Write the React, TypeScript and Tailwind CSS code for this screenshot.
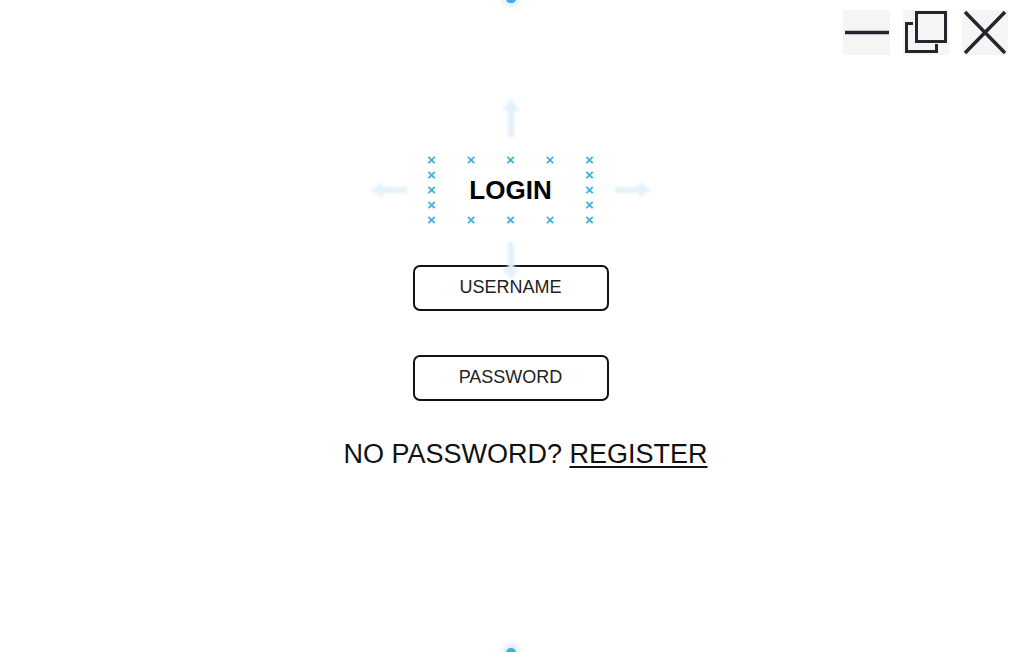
import React from "react";

const X = () => (
  <span className="block text-[15px] font-semibold leading-[11px] text-[#3ab0da]">×</span>
);

export default function App() {
  const row1 = [0, 1, 2, 3, 4];
  return (
    <div className="relative h-[652px] w-full overflow-hidden bg-white font-['Liberation_Sans',Arial,sans-serif] text-[#111]">
      {/* top & bottom dots */}
      <div className="absolute left-[506px] top-[-6px] h-[9px] w-[10px] rounded-full bg-[#3aaedc] shadow-[0_0_6px_3px_rgba(58,174,220,0.25)]" />
      <div className="absolute left-[506px] bottom-[-6px] h-[10px] w-[10px] rounded-full bg-[#3aaedc] shadow-[0_0_6px_3px_rgba(58,174,220,0.25)]" />

      {/* window controls */}
      <div className="absolute right-[13px] top-[10px] flex gap-[13px]">
        <div className="h-[45px] w-[47px] bg-[#f5f5f5]">
          <svg width="47" height="45" viewBox="0 0 47 45">
            <line x1="2" y1="22.5" x2="46" y2="22.5" stroke="#25252e" strokeWidth="3.5" />
          </svg>
        </div>
        <div className="h-[45px] w-[46px] bg-[#f5f5f5]">
          <svg width="46" height="45" viewBox="0 0 46 45" fill="none" stroke="#25252e" strokeWidth="3">
            <rect x="13.5" y="2.5" width="29" height="29" />
            <path d="M10 13.5 H3.5 V41.5 H33.5 V34" />
          </svg>
        </div>
        <div className="h-[45px] w-[46px] bg-[#f5f5f5]">
          <svg width="46" height="45" viewBox="0 0 46 45" fill="none" stroke="#25252e" strokeWidth="3.5">
            <line x1="3" y1="2" x2="43" y2="43" />
            <line x1="43" y1="2" x2="3" y2="43" />
          </svg>
        </div>
      </div>

      <div className="flex flex-col items-center pt-[152px]">
        <div className="relative">
          {/* faint arrows */}
          <svg className="absolute left-[89px] top-[-53px] blur-[1.5px]" width="20" height="40" viewBox="0 0 20 40">
            <path d="M10 0 L19 12 H13 V38 H7 V12 H1 Z" fill="#e2f1fa" />
          </svg>
          <svg className="absolute left-[89px] top-[88px] blur-[1.5px]" width="20" height="40" viewBox="0 0 20 40">
            <path d="M10 40 L19 28 H13 V2 H7 V28 H1 Z" fill="#e2f1fa" />
          </svg>
          <svg className="absolute left-[-41px] top-[28px] blur-[1.5px]" width="38" height="20" viewBox="0 0 38 20">
            <path d="M0 10 L12 2 V7 H36 V13 H12 V18 Z" fill="#e2f1fa" />
          </svg>
          <svg className="absolute left-[201px] top-[28px] blur-[1.5px]" width="38" height="20" viewBox="0 0 38 20">
            <path d="M38 10 L26 2 V7 H2 V13 H26 V18 Z" fill="#e2f1fa" />
          </svg>

          <div className="grid grid-cols-[repeat(5,39.5px)] grid-rows-[repeat(5,15px)] place-items-center">
            {row1.map((i) => (
              <X key={"t" + i} />
            ))}
            <div className="col-start-1 row-start-2"><X /></div>
            <div className="col-start-1 row-start-3"><X /></div>
            <div className="col-start-1 row-start-4"><X /></div>
            <div className="col-start-2 col-span-3 row-start-2 row-span-3 text-[26px] font-bold leading-none text-black">
              LOGIN
            </div>
            <div className="col-start-5 row-start-2"><X /></div>
            <div className="col-start-5 row-start-3"><X /></div>
            <div className="col-start-5 row-start-4"><X /></div>
            {row1.map((i) => (
              <div key={"b" + i} className="row-start-5">
                <X />
              </div>
            ))}
          </div>
        </div>

        <div className="mt-[37.5px] flex h-[46px] w-[196px] items-center justify-center rounded-[7px] border-2 border-[#111] text-[18px] text-[#222]">
          USERNAME
        </div>
        <div className="mt-[44px] flex h-[46px] w-[196px] items-center justify-center rounded-[7px] border-2 border-[#111] text-[18px] text-[#222]">
          PASSWORD
        </div>
        <div className="ml-[30px] mt-[40px] text-[27px] leading-[27px] text-[#111]">
          NO PASSWORD? <span className="underline decoration-[1.5px] underline-offset-[3px]">REGISTER</span>
        </div>
      </div>
    </div>
  );
}
